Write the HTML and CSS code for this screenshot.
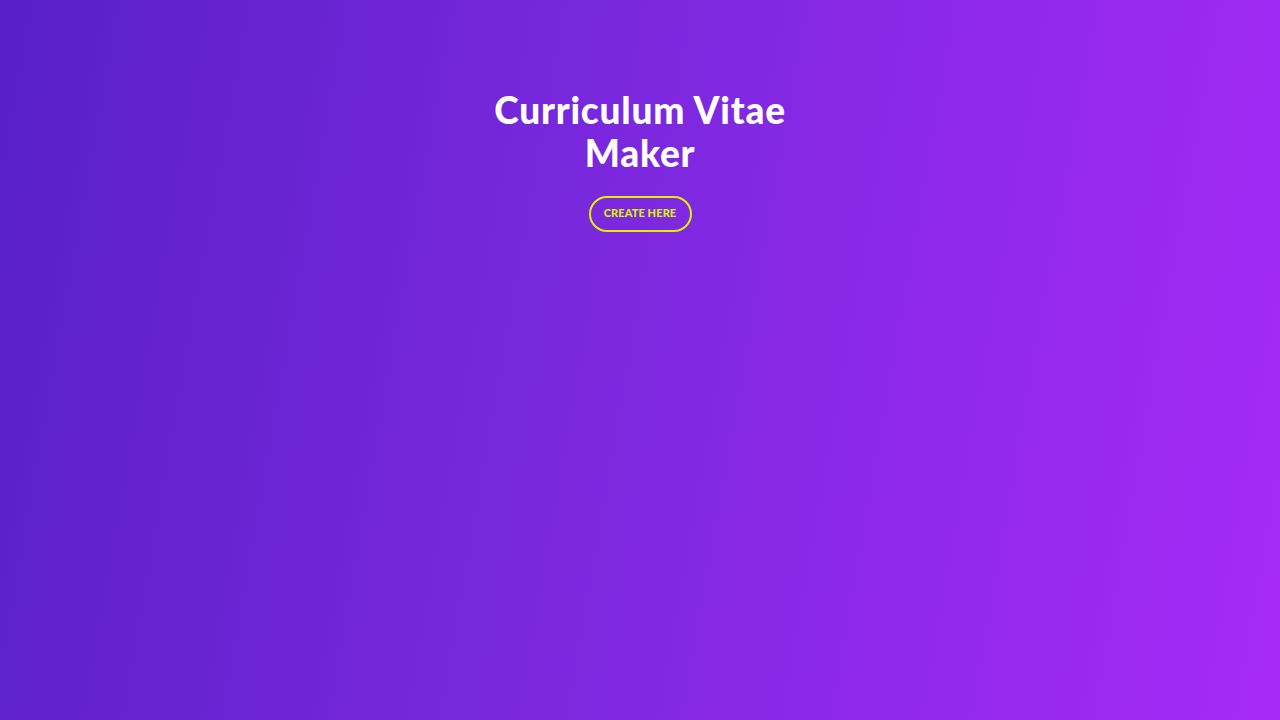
FILE: index.html
```html
<!DOCTYPE html>
<html lang="en">
<head>
<meta charset="utf-8">
<title>Curriculum Vitae Maker</title>
<link rel="stylesheet" href="styles.css">
</head>
<body>
<main class="hero">
  <h1 class="hero-title">Curriculum Vitae Maker</h1>
  <a class="hero-button" href="#">CREATE HERE</a>
</main>
</body>
</html>
```
FILE: styles.css
```css
html, body {
  margin: 0;
  padding: 0;
  height: 100%;
}
body {
  background: linear-gradient(100deg, #5820c6 0%, #7a28de 45%, #a62af6 100%);
  font-family: Lato, "Noto Sans", sans-serif;
  color: #fff;
}
.hero {
  display: flex;
  flex-direction: column;
  align-items: center;
  padding-top: 88px;
}
.hero-title {
  margin: 0;
  width: 330px;
  text-align: center;
  font-size: 37px;
  font-weight: 900;
  line-height: 43px;
  letter-spacing: 0.8px;
}
.hero-button {
  margin-top: 22px;
  display: inline-flex;
  align-items: center;
  justify-content: center;
  box-sizing: border-box;
  width: 103px;
  height: 36px;
  padding-bottom: 3px;
  border: 2px solid #e0f005;
  border-radius: 18px;
  color: #d8f20a;
  font-size: 11px;
  font-weight: 900;
  text-decoration: none;
  letter-spacing: 0.1px;
}
```
